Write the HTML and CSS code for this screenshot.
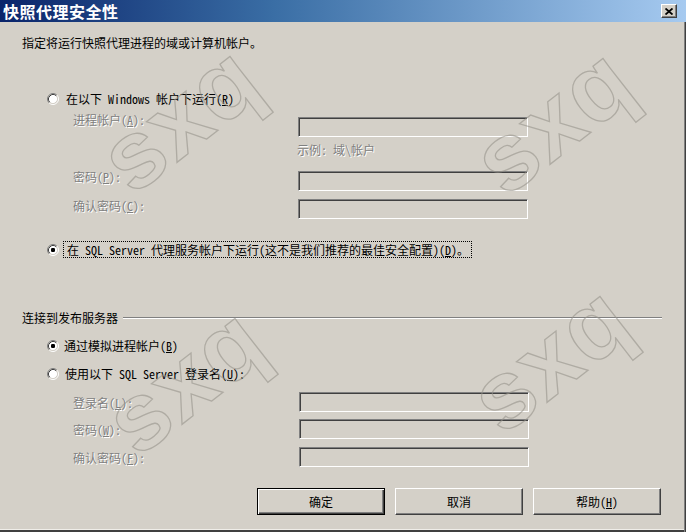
FILE: index.html
```html
<!DOCTYPE html>
<html lang="zh-CN">
<head>
<meta charset="utf-8">
<title>快照代理安全性</title>
<link rel="stylesheet" href="styles.css">
</head>
<body>
<div class="dialog">
  <div class="titlebar">
    <span class="title">快照代理安全性</span>
    <span class="close"><svg width="8" height="7" viewBox="0 0 8 7"><path d="M0.5 0.5 L7.5 6.5 M7.5 0.5 L0.5 6.5" stroke="#000" stroke-width="1.8" fill="none"/></svg></span>
  </div>
  <div class="content">
    <div class="row intro">指定将运行快照代理进程的域或计算机帐户。</div>

    <div class="row radio r1">
      <svg class="rb" width="12" height="12" viewBox="0 0 12 12"><circle cx="6" cy="6" r="4.5" fill="#fff"/><path d="M2.11 9.89 A5.5 5.5 0 0 1 9.89 2.11" stroke="#808080" fill="none"/><path d="M9.89 2.11 A5.5 5.5 0 0 1 2.11 9.89" stroke="#fff" fill="none"/><path d="M2.82 9.18 A4.5 4.5 0 0 1 9.18 2.82" stroke="#404040" fill="none"/><path d="M9.18 2.82 A4.5 4.5 0 0 1 2.82 9.18" stroke="#d4d0c8" fill="none"/></svg>
      <span class="rlabel l1">在以下 Windows 帐户下运行(<u>R</u>)</span>
    </div>

    <div class="field up fa"><span class="flabel dis">进程帐户(<u>A</u>):</span><span class="box"></span></div>
    <div class="row hint dis">示例: 域\帐户</div>
    <div class="field up fp"><span class="flabel dis">密码(<u>P</u>):</span><span class="box"></span></div>
    <div class="field up fc"><span class="flabel dis">确认密码(<u>C</u>):</span><span class="box"></span></div>

    <div class="row radio r2">
      <svg class="rb" width="12" height="12" viewBox="0 0 12 12"><circle cx="6" cy="6" r="4.5" fill="#fff"/><path d="M2.11 9.89 A5.5 5.5 0 0 1 9.89 2.11" stroke="#808080" fill="none"/><path d="M9.89 2.11 A5.5 5.5 0 0 1 2.11 9.89" stroke="#fff" fill="none"/><path d="M2.82 9.18 A4.5 4.5 0 0 1 9.18 2.82" stroke="#404040" fill="none"/><path d="M9.18 2.82 A4.5 4.5 0 0 1 2.82 9.18" stroke="#d4d0c8" fill="none"/><rect x="4" y="4" width="4" height="4" rx="1.2" fill="#000"/></svg>
      <span class="rlabel focus">在 SQL Server 代理服务帐户下运行(这不是我们推荐的最佳安全配置)(<u>D</u>)。</span>
    </div>

    <div class="row group"><span class="glabel">连接到发布服务器</span><span class="etch"></span></div>

    <div class="row radio r3">
      <svg class="rb" width="12" height="12" viewBox="0 0 12 12"><circle cx="6" cy="6" r="4.5" fill="#fff"/><path d="M2.11 9.89 A5.5 5.5 0 0 1 9.89 2.11" stroke="#808080" fill="none"/><path d="M9.89 2.11 A5.5 5.5 0 0 1 2.11 9.89" stroke="#fff" fill="none"/><path d="M2.82 9.18 A4.5 4.5 0 0 1 9.18 2.82" stroke="#404040" fill="none"/><path d="M9.18 2.82 A4.5 4.5 0 0 1 2.82 9.18" stroke="#d4d0c8" fill="none"/><rect x="4" y="4" width="4" height="4" rx="1.2" fill="#000"/></svg>
      <span class="rlabel l3">通过模拟进程帐户(<u>B</u>)</span>
    </div>
    <div class="row radio r4">
      <svg class="rb" width="12" height="12" viewBox="0 0 12 12"><circle cx="6" cy="6" r="4.5" fill="#fff"/><path d="M2.11 9.89 A5.5 5.5 0 0 1 9.89 2.11" stroke="#808080" fill="none"/><path d="M9.89 2.11 A5.5 5.5 0 0 1 2.11 9.89" stroke="#fff" fill="none"/><path d="M2.82 9.18 A4.5 4.5 0 0 1 9.18 2.82" stroke="#404040" fill="none"/><path d="M9.18 2.82 A4.5 4.5 0 0 1 2.82 9.18" stroke="#d4d0c8" fill="none"/></svg>
      <span class="rlabel l4">使用以下 SQL Server 登录名(<u>U</u>):</span>
    </div>

    <div class="field low fl"><span class="flabel dis">登录名(<u>L</u>):</span><span class="box"></span></div>
    <div class="field low fw"><span class="flabel dis">密码(<u>W</u>):</span><span class="box"></span></div>
    <div class="field low ff"><span class="flabel dis">确认密码(<u>F</u>):</span><span class="box"></span></div>

    <div class="buttons">
      <span class="btn default">确定</span>
      <span class="btn">取消</span>
      <span class="btn">帮助(<u>H</u>)</span>
    </div>
  </div>

  <div class="wm wm1">sxq</div>
  <div class="wm wm2">sxq</div>
  <div class="wm wm3">sxq</div>
  <div class="wm wm4">sxq</div>
</div>
</body>
</html>
```
FILE: styles.css
```css
html, body {
  margin: 0;
  padding: 0;
  background: #d4d0c8;
}
body {
  font-family: "Noto Sans CJK SC", "Liberation Sans", sans-serif;
  font-size: 12px;
  font-feature-settings: "hwid" 1;
  color: #000;
}
.dialog {
  position: relative;
  width: 686px;
  height: 532px;
  overflow: hidden;
  background: #d4d0c8;
  box-shadow: inset -1px 0 #404040, inset -2px 0 #808080, inset 0 -2px #404040, inset 0 -3px #f0eee9;
}
.titlebar {
  height: 22px;
  display: flex;
  align-items: center;
  justify-content: space-between;
  background: linear-gradient(to right, #0a246a 0%, #3a6ea5 40%, #a6caf0 100%);
  padding: 0 9px 0 3px;
}
.title {
  color: #fff;
  font-weight: bold;
  font-size: 16px;
  line-height: 22px;
  letter-spacing: 0.5px;
}
.close {
  width: 16px;
  height: 14px;
  box-sizing: border-box;
  display: flex;
  align-items: center;
  justify-content: center;
  background: #d4d0c8;
  border: 1px solid;
  border-color: #fff #404040 #404040 #fff;
  box-shadow: inset -1px -1px #808080;
}
.content {
  display: flex;
  flex-direction: column;
  padding-left: 22px;
}
.row {
  display: flex;
  align-items: center;
  line-height: 14px;
  height: 14px;
}
.dis {
  color: #808080;
  text-shadow: 1px 1px 0 #fff;
}
.intro { margin-top: 14px; }
.radio .rb { margin-left: 25px; flex: none; }
.r1 { margin-top: 42px; }
.l1 { margin-left: 7px; }
.field {
  display: flex;
  padding-left: 51px;
}
.field.up { align-items: flex-start; line-height: 14px; }
.field.up .flabel { width: 225px; }
.field.low { align-items: center; height: 20px; }
.field.low .flabel { width: 226px; }
.box {
  width: 230px;
  height: 20px;
  box-sizing: border-box;
  border: 1px solid;
  border-color: #808080 #fff #fff #808080;
  box-shadow: inset 1px 1px #404040, inset -1px -1px #d4d0c8;
  background: #d4d0c8;
}
.fa { margin-top: 7px; }
.fa .box { margin-top: 4px; }
.hint { margin-top: 6px; padding-left: 275px; }
.fp { margin-top: 13px; }
.fp .box { margin-top: 1px; }
.fc { margin-top: 8px; }
.r2 { margin-top: 22px; height: 17px; }
.focus {
  margin-left: 4px;
  border: 1px dotted #000;
  padding: 0 2px 0 3px;
  height: 15px;
  line-height: 15px;
}
.group { margin-top: 53px; }
.glabel { flex: none; }
.etch {
  width: 539px;
  margin-left: 5px;
  height: 0;
  border-top: 1px solid #808080;
  border-bottom: 1px solid #fff;
}
.r3 { margin-top: 14px; }
.l3 { margin-left: 5px; }
.r4 { margin-top: 14px; }
.l4 { margin-left: 6px; }
.fl { margin-top: 11px; }
.fl .box, .fw .box, .ff .box { margin-left: 0; }
.fw { margin-top: 7px; }
.ff { margin-top: 8px; }
.buttons {
  margin-top: 21px;
  padding-left: 235px;
  display: flex;
  gap: 10px;
}
.btn {
  width: 128px;
  height: 27px;
  box-sizing: border-box;
  display: flex;
  align-items: center;
  justify-content: center;
  background: #d4d0c8;
  border: 1px solid;
  border-color: #fff #404040 #404040 #fff;
  box-shadow: inset -1px -1px #808080;
}
.btn.default {
  border-color: #000;
  box-shadow: inset 1px 1px #fff, inset -1px -1px #404040, inset -2px -2px #808080;
}
.wm {
  position: absolute;
  font-family: "Liberation Sans", "DejaVu Sans", sans-serif;
  font-weight: bold;
  font-size: 96px;
  line-height: 1;
  color: transparent;
  -webkit-text-stroke: 1.3px rgba(150, 146, 138, 0.6);
  transform: translate(-50%, -50%) rotate(-38deg);
  pointer-events: none;
  letter-spacing: 2px;
}
.wm1 { left: 180px; top: 118px; }
.wm2 { left: 553px; top: 120px; }
.wm3 { left: 185px; top: 380px; }
.wm4 { left: 550px; top: 358px; }
```
